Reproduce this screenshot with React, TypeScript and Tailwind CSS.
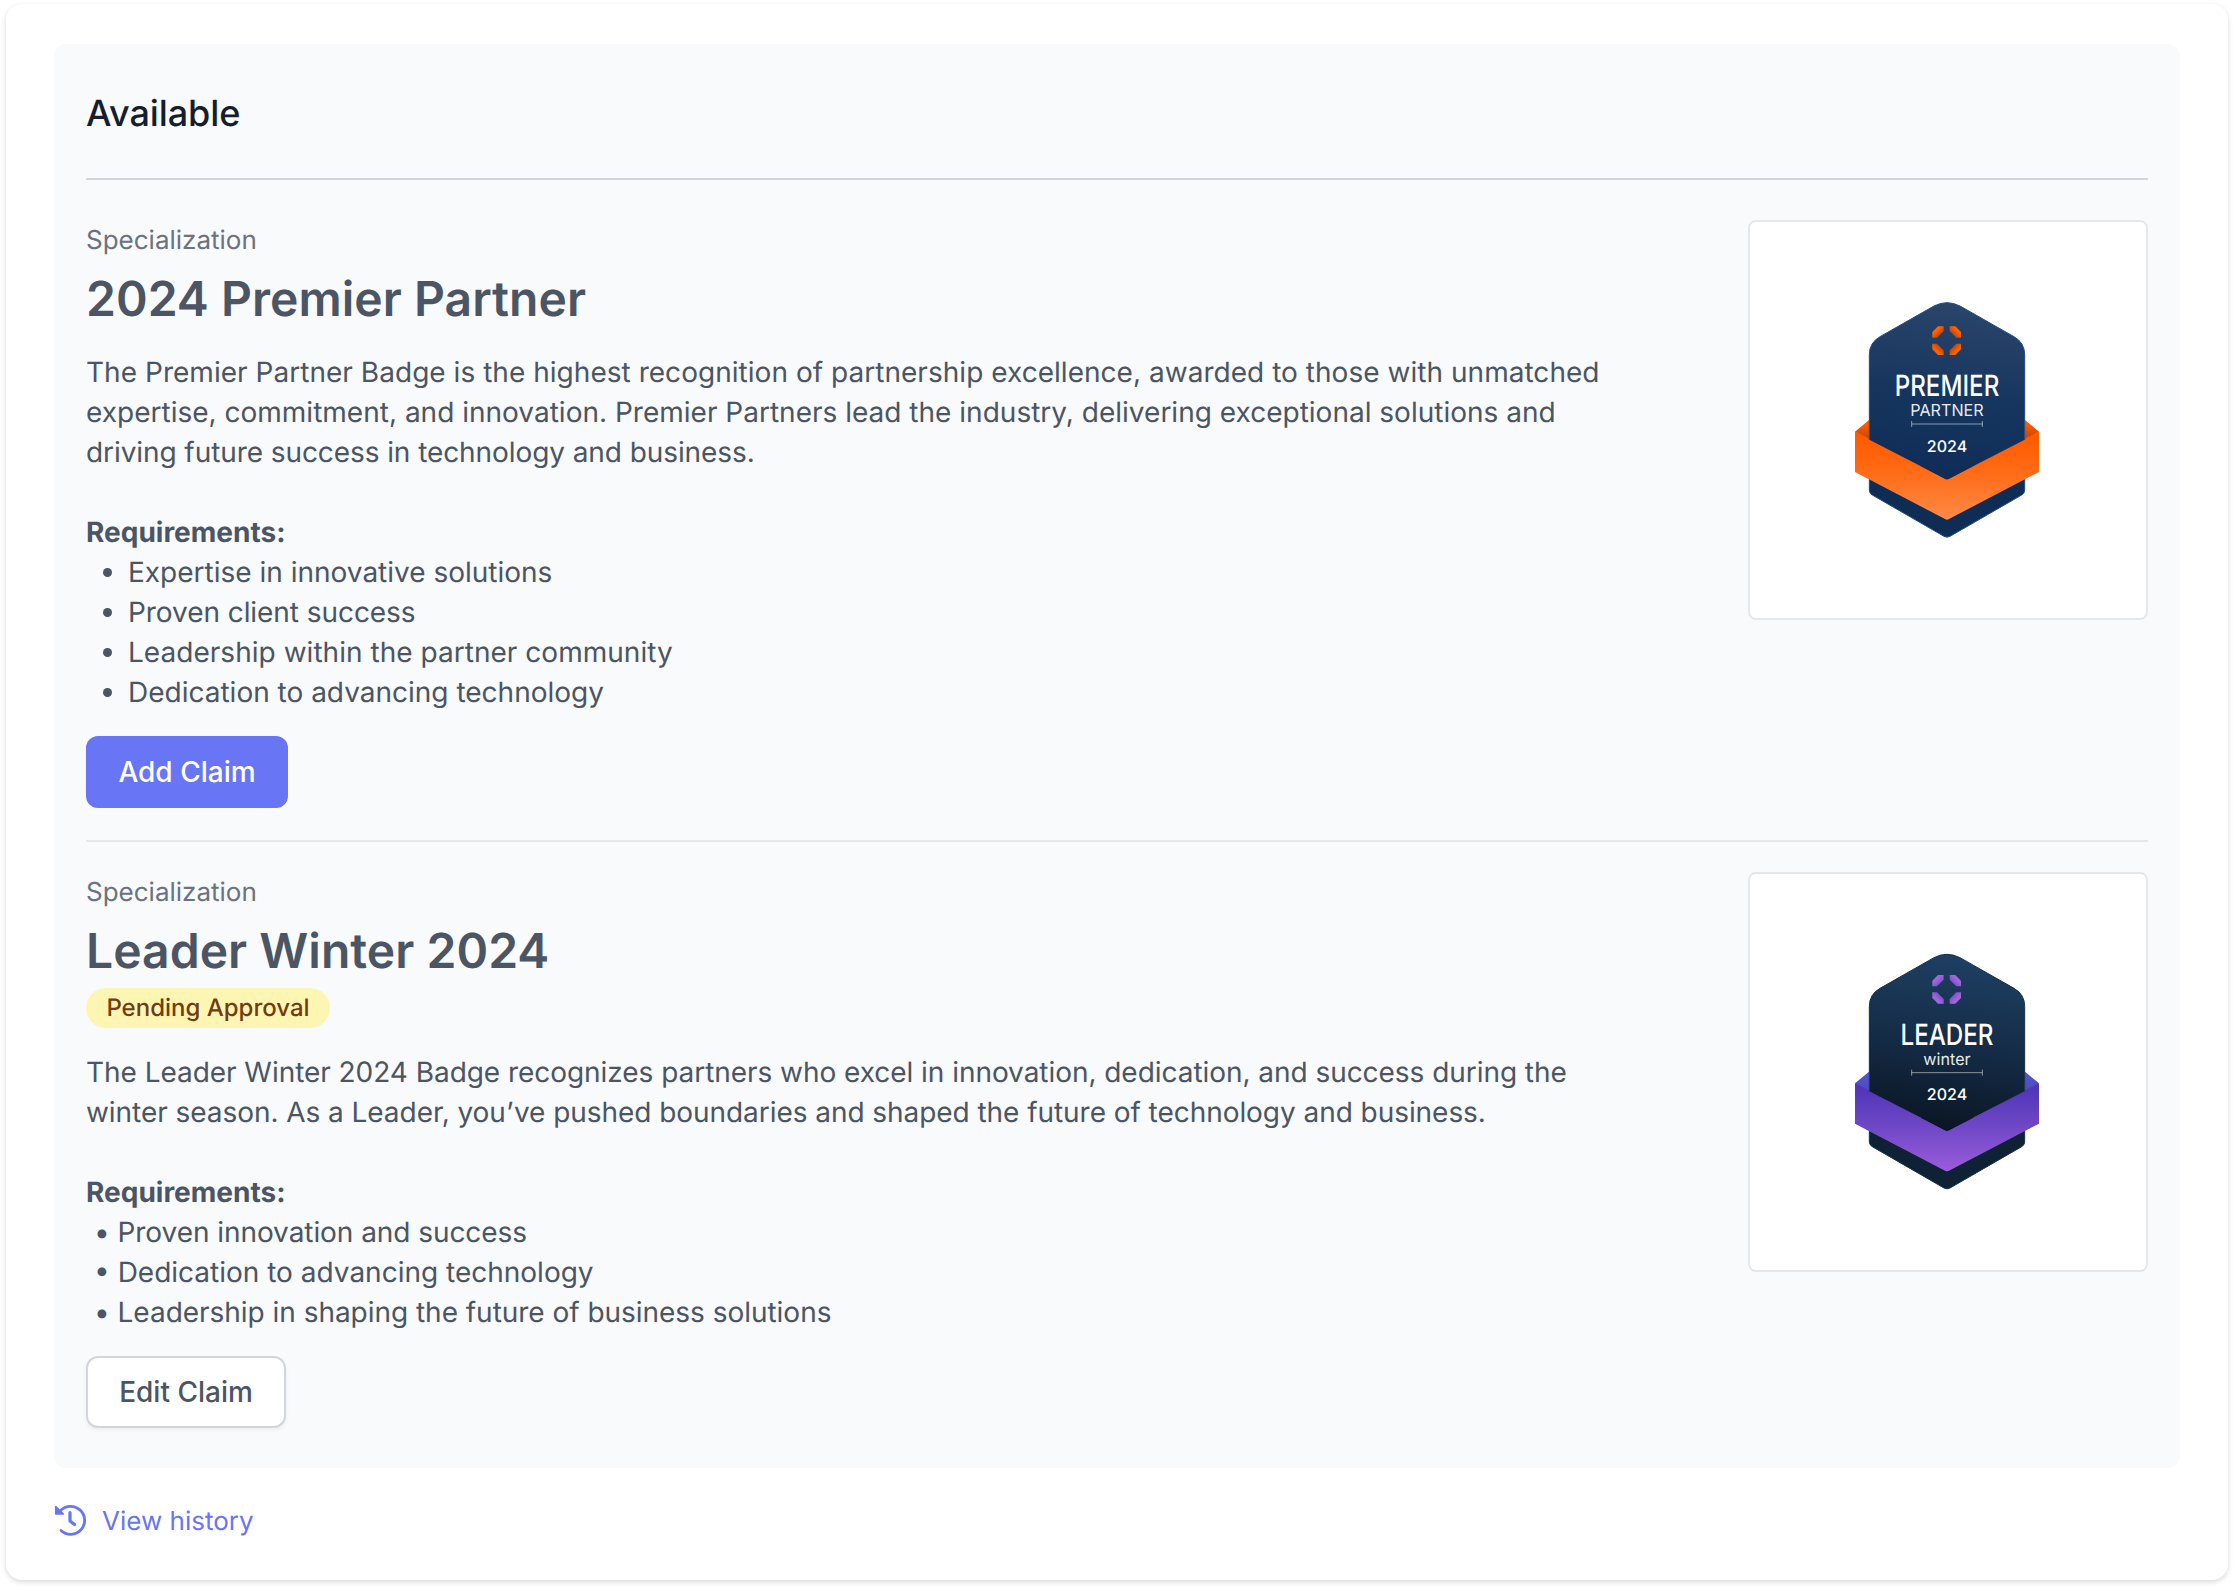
import React from "react";

type BadgeTheme = {
  id: string;
  viewBox: string;
  dy: number;
  body: string[];
  tail: string;
  edge: string;
  ribbon: string[];
  fold: string[];
  mark: string[];
  title: string;
  titleWidth: number;
  subtitle: string;
  subtitleWidth: number;
  textDy: number;
};

const premier: BadgeTheme = {
  id: "premier",
  viewBox: "-6 0 720 840",
  dy: 0,
  body: ["#2b456a", "#17365f", "#0e2c57"],
  tail: "#0f2c55",
  edge: "#1d4a85",
  ribbon: ["#ff5c00", "#ff6a14", "#ff8a48"],
  fold: ["#ff5a00", "#b84208"],
  mark: ["#ff6200", "#c24505"],
  title: "PREMIER",
  titleWidth: 314,
  subtitle: "PARTNER",
  subtitleWidth: 220,
  textDy: 0,
};

const leader: BadgeTheme = {
  id: "leader",
  viewBox: "-6 6 720 840",
  dy: 5,
  body: ["#1e4063", "#152c47", "#0a1523"],
  tail: "#0e2135",
  edge: "#14304d",
  ribbon: ["#5036b8", "#6b45c4", "#9a5cdc"],
  fold: ["#4f55cc", "#5248c0"],
  mark: ["#a066e0", "#8450c8"],
  title: "LEADER",
  titleWidth: 279,
  subtitle: "winter",
  subtitleWidth: 142,
  textDy: -4,
};

function BadgeArt({ t }: { t: BadgeTheme }) {
  const g = (n: string) => `${t.id}-${n}`;
  const u = (n: string) => `url(#${t.id}-${n})`;
  return (
    <svg width="240" height="280" viewBox={t.viewBox} fontFamily="Inter, sans-serif" fill="#fff">
      <defs>
        <linearGradient id={g("body")} gradientUnits="userSpaceOnUse" x1="400" y1="70" x2="320" y2="600">
          <stop offset="0" stopColor={t.body[0]} />
          <stop offset="0.5" stopColor={t.body[1]} />
          <stop offset="1" stopColor={t.body[2]} />
        </linearGradient>
        <linearGradient id={g("ribbon")} gradientUnits="userSpaceOnUse" x1="0" y1="470" x2="0" y2="720">
          <stop offset="0" stopColor={t.ribbon[0]} />
          <stop offset="0.4" stopColor={t.ribbon[1]} />
          <stop offset="1" stopColor={t.ribbon[2]} />
        </linearGradient>
        <linearGradient id={g("fold")} x1="0" y1="0" x2="0" y2="1">
          <stop offset="0.2" stopColor={t.fold[0]} />
          <stop offset="1" stopColor={t.fold[1]} />
        </linearGradient>
        <linearGradient id={g("mark")} gradientUnits="userSpaceOnUse" x1="311" y1="143" x2="336" y2="168">
          <stop offset="0.35" stopColor={t.mark[0]} />
          <stop offset="0.8" stopColor={t.mark[1]} />
        </linearGradient>
      </defs>
      <g transform={`translate(0 ${t.dy})`}>
        <path d="M117 420 L75 455 L117 485 Z M585 420 L627 455 L585 485 Z" fill={u("fold")} />
        <path
          d="M118 560 H584 V630 Q584 640 575 645 L360 769 Q351 774 342 769 L127 645 Q118 640 118 630 Z"
          fill={t.tail}
          stroke={t.edge}
          strokeWidth="3"
        />
        <path
          d="M75 454 L345 596 Q351 599 357 596 L627 454 V576 L357 717 Q351 721 345 717 L75 576 Z"
          fill={u("ribbon")}
        />
        <path
          d="M118 479 V224 Q118 188 150 170 L312 78 Q351 58 390 78 L552 170 Q584 188 584 224 V479 L357 596 Q351 599 345 596 Z"
          fill={u("body")}
        />
        <path
          d="M118 479 V224 Q118 188 150 170 L312 78 Q351 58 390 78 L552 170 Q584 188 584 224 V479"
          fill="none"
          stroke={t.edge}
          strokeWidth="3"
        />
      </g>
      <g transform={`translate(0 ${t.textDy})`}>
        {["", "translate(700 0) scale(-1 1)", "translate(0 364) scale(1 -1)", "translate(700 364) scale(-1 -1)"].map(
          (m) => (
            <path key={m} transform={m} d="M307 173 V156 L324 139 H341 V153 L321 173 Z" fill={u("mark")} />
          )
        )}
        <text x="351" y="349" fontSize="88" fontWeight="450" textAnchor="middle" textLength={t.titleWidth} lengthAdjust="spacingAndGlyphs">
          {t.title}
        </text>
        <text x="351" y="408" fontSize="50" textAnchor="middle" textLength={t.subtitleWidth} lengthAdjust="spacingAndGlyphs" fillOpacity="0.92">
          {t.subtitle}
        </text>
        <path d="M245 423 V441 M457 423 V441 M245 432 H457" stroke="#fff" strokeOpacity="0.5" strokeWidth="3" fill="none" />
        <text x="351" y="515" fontSize="48" fontWeight="450" textAnchor="middle" textLength="121" lengthAdjust="spacingAndGlyphs">
          2024
        </text>
      </g>
    </svg>
  );
}

function BadgeCard({ t }: { t: BadgeTheme }) {
  return (
    <div className="flex size-[400px] shrink-0 items-center justify-center rounded-lg border-2 border-[#e5e7eb] bg-white">
      <BadgeArt t={t} />
    </div>
  );
}

function HistoryIcon() {
  return (
    <svg width="32" height="32" viewBox="0 0 32 32" fill="none" stroke="#6875f5" strokeWidth="2.8" strokeLinecap="round">
      <path d="M6 7.2 A14 14 0 1 1 7 26.5" />
      <path d="M16 8.5 V17 L20.5 20.5" strokeWidth="3.2" strokeLinejoin="round" />
      <path d="M1.8 2.5 V10 H9.3 Z" fill="#6875f5" strokeWidth="1.6" strokeLinejoin="round" />
    </svg>
  );
}

function Kicker() {
  return <p className="pt-px text-[26px] leading-10 text-[#6b7280]">Specialization</p>;
}

export default function App() {
  return (
    <div className="h-[1588px] w-[2234px] bg-white px-[6px] pt-[4px] font-[Inter,sans-serif] text-[28px] leading-10 text-[#4b5563] [text-rendering:geometricPrecision]">
      <main className="h-[1576px] rounded-2xl bg-white px-12 pt-10 shadow-[0_2px_6px_rgba(0,0,0,0.1),0_2px_4px_rgba(0,0,0,0.06)]">
        <section className="h-[1424px] rounded-xl bg-[#f9fafb] px-8">
          <header className="flex h-[136px] items-center border-b-2 border-[#d2d6dc] pt-1">
            <h1 className="text-4xl font-medium tracking-[-0.08px] text-[#161e2e]">Available</h1>
          </header>

          <article className="flex h-[662px] items-start justify-between border-b-2 border-[#e5e7eb] pt-10">
            <div className="w-[1540px]">
              <Kicker />
              <h2 className="mt-2 text-5xl leading-[60px] font-semibold tracking-[0.04px]">2024 Premier Partner</h2>
              <div className="mt-[23px] whitespace-nowrap">
                <p className="tracking-[0.033px]">
                  The Premier Partner Badge is the highest recognition of partnership excellence, awarded to those with unmatched
                </p>
                <p className="tracking-[0.008px]">
                  expertise, commitment, and innovation. Premier Partners lead the industry, delivering exceptional solutions and
                </p>
                <p className="tracking-[-0.08px]">driving future success in technology and business.</p>
              </div>
              <p className="mt-10 font-bold">Requirements:</p>
              <ul className="list-disc pl-[42px]">
                <li>Expertise in innovative solutions</li>
                <li className="tracking-[-0.06px]">Proven client success</li>
                <li className="tracking-[0.03px]">Leadership within the partner community</li>
                <li>Dedication to advancing technology</li>
              </ul>
              <button className="mt-6 flex h-[72px] w-[202px] items-center justify-center rounded-xl bg-[#6875f5] font-medium text-white">
                Add Claim
              </button>
            </div>
            <BadgeCard t={premier} />
          </article>

          <article className="flex items-start justify-between pt-[30px]">
            <div className="w-[1540px]">
              <Kicker />
              <h2 className="mt-2 text-5xl leading-[60px] font-semibold tracking-[0.04px]">Leader Winter 2024</h2>
              <span className="mt-[7px] flex h-10 w-[244px] items-center justify-center rounded-full bg-[#fdf6b2] text-2xl font-medium text-[#723b13]">
                Pending Approval
              </span>
              <div className="mt-6 whitespace-nowrap">
                <p className="tracking-[-0.046px]">
                  The Leader Winter 2024 Badge recognizes partners who excel in innovation, dedication, and success during the
                </p>
                <p className="tracking-[-0.052px]">
                  winter season. As a Leader, you’ve pushed boundaries and shaped the future of technology and business.
                </p>
              </div>
              <p className="mt-10 font-bold">Requirements:</p>
              <div className="pl-2 whitespace-pre">
                <p className="tracking-[-0.06px]">• Proven innovation and success</p>
                <p>• Dedication to advancing technology</p>
                <p className="tracking-[-0.03px]">• Leadership in shaping the future of business solutions</p>
              </div>
              <button className="mt-6 flex h-[72px] w-[200px] items-center justify-center rounded-xl border-2 border-[#d2d6dc] bg-white font-medium shadow-[0_2px_4px_rgba(0,0,0,0.05)]">
                Edit Claim
              </button>
            </div>
            <BadgeCard t={leader} />
          </article>
        </section>

        <a className="mt-8 flex h-10 w-fit items-center gap-4 text-[#6875f5]">
          <HistoryIcon />
          <span className="pt-[3px] text-[26px]">View history</span>
        </a>
      </main>
    </div>
  );
}
